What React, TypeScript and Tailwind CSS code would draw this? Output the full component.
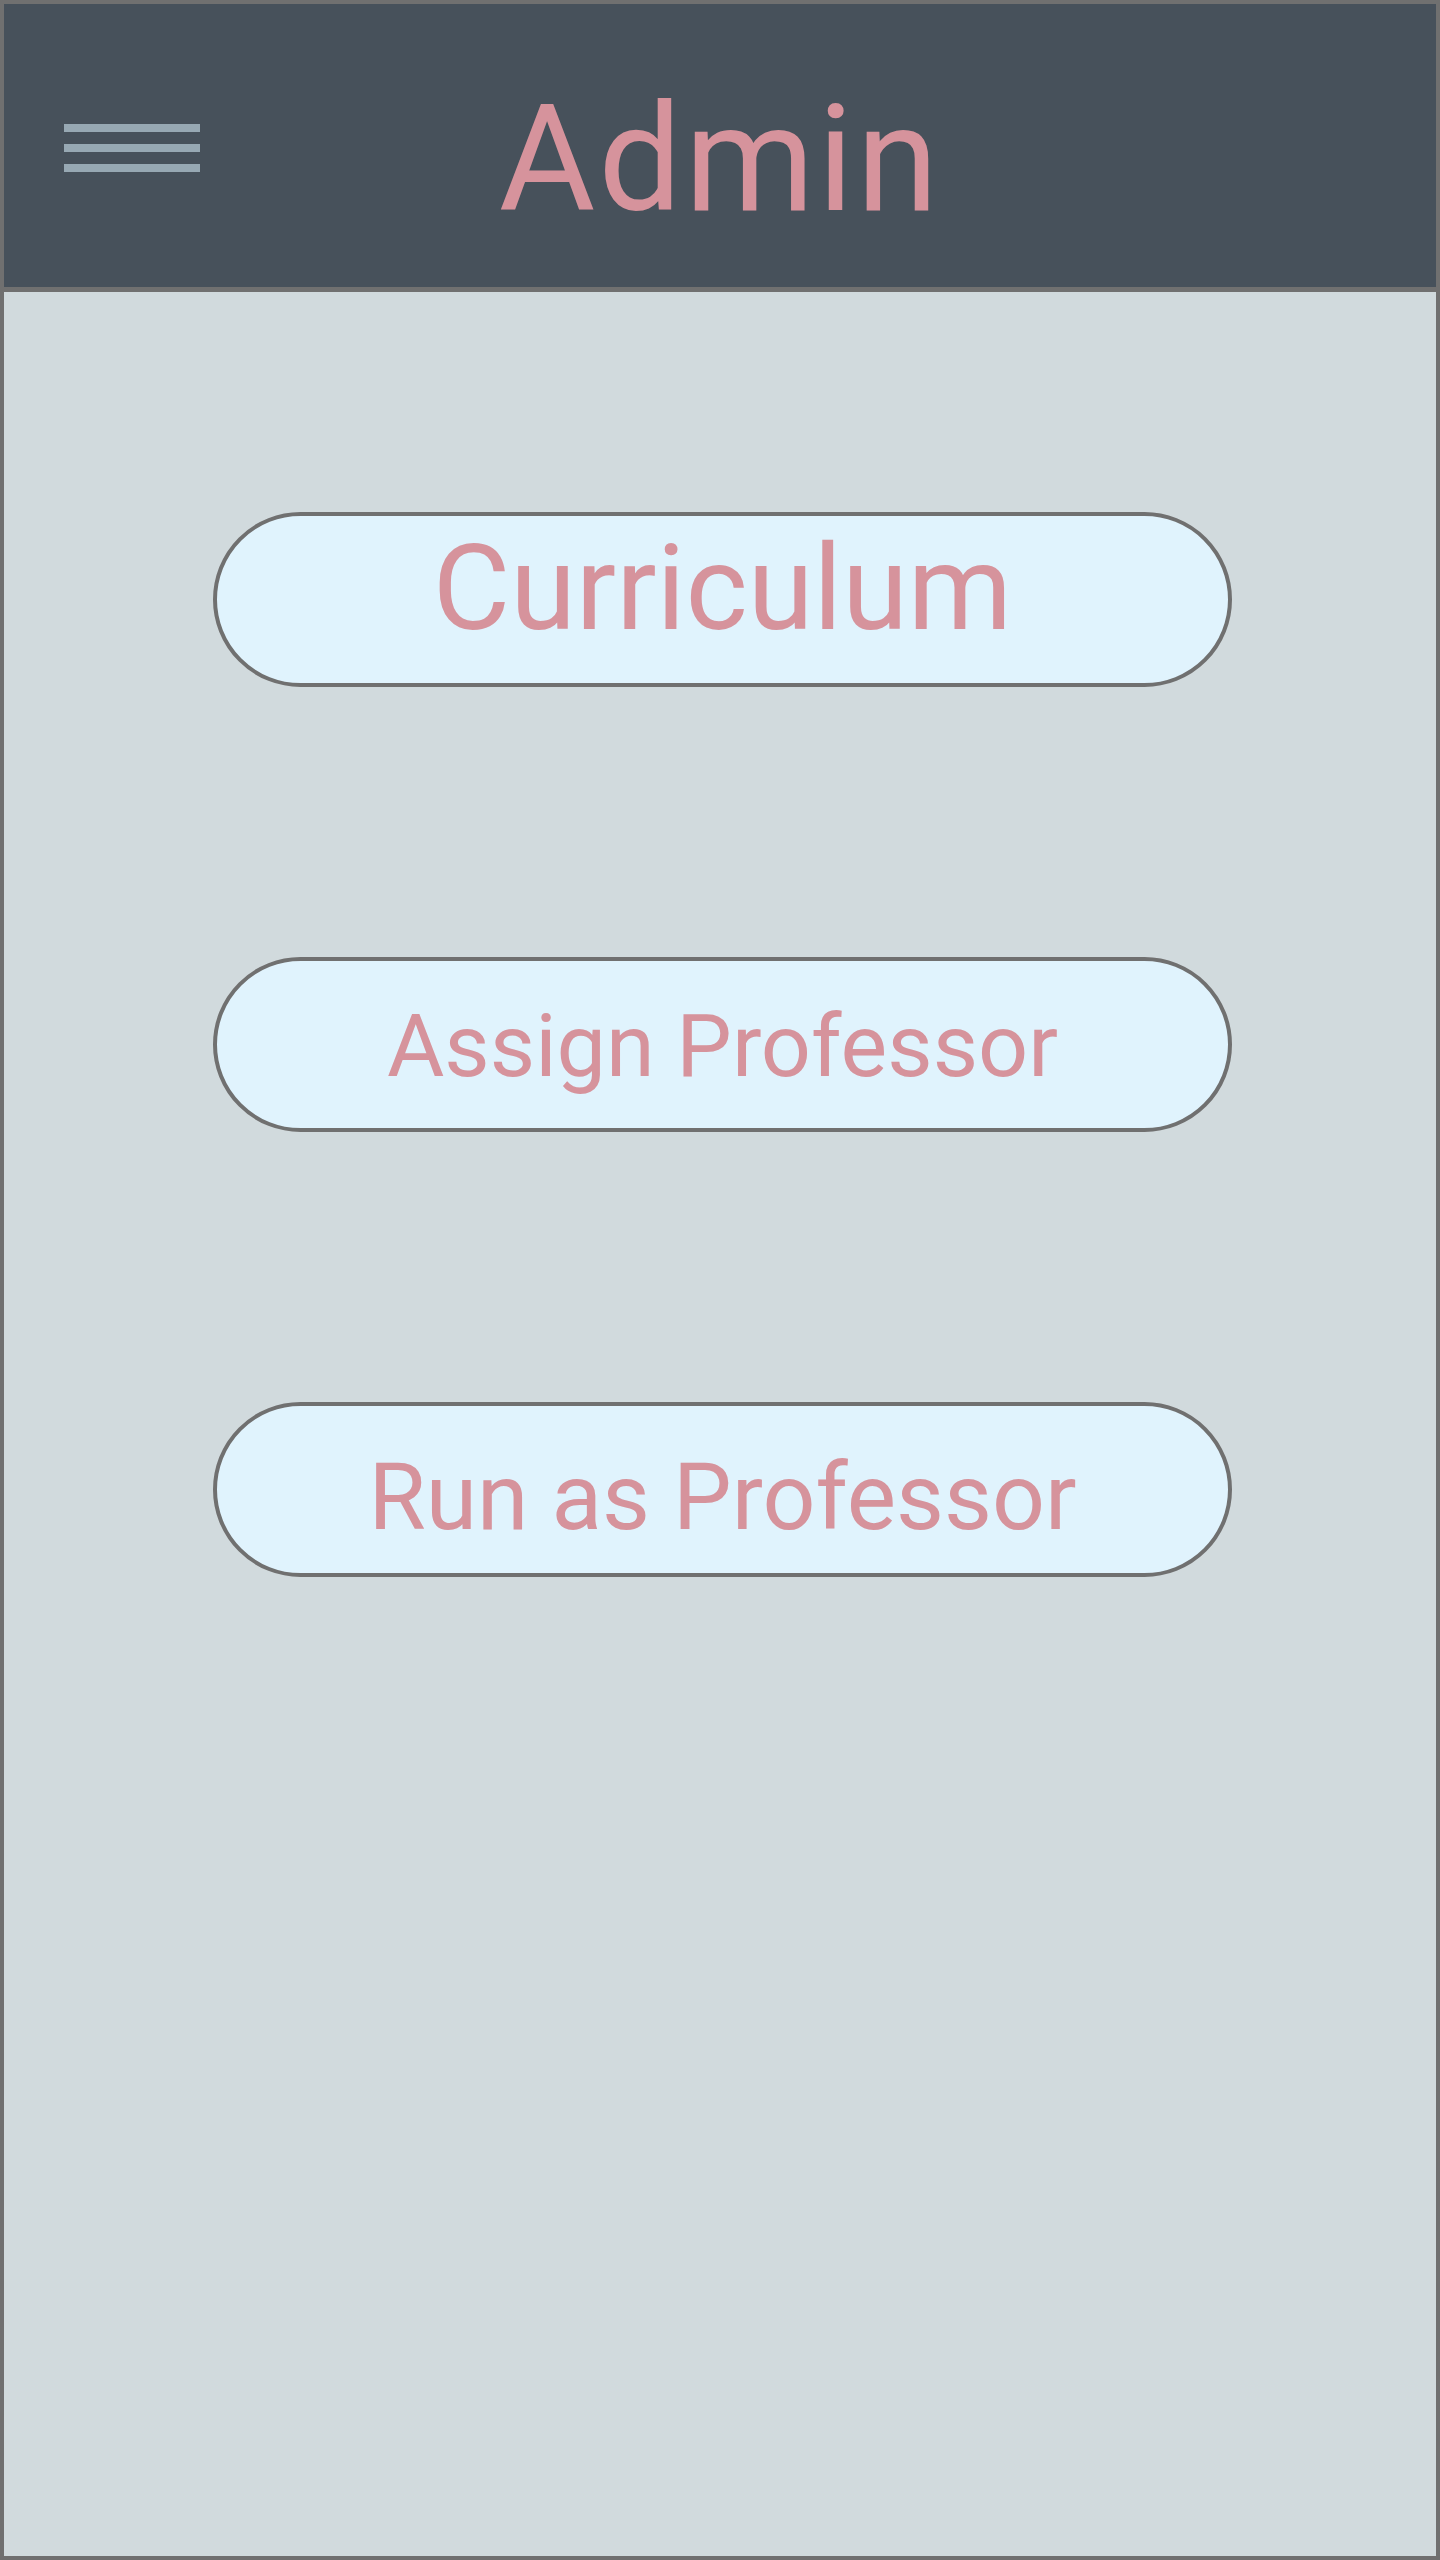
import React from "react";

const font = { fontFamily: "Roboto, 'Open Sans', sans-serif" };

function MenuIcon() {
  return (
    <div className="flex flex-col gap-[12px] w-[136px]">
      <div className="h-[8px] bg-[#97a8b3]" />
      <div className="h-[8px] bg-[#97a8b3]" />
      <div className="h-[8px] bg-[#97a8b3]" />
    </div>
  );
}

export default function App() {
  return (
    <div
      className="w-[1440px] h-[2560px] border-4 border-[#707070] bg-[#d1dadd] flex flex-col"
      style={font}
    >
      <header className="h-[288px] shrink-0 bg-[#47515b] border-b-[5px] border-[#707070] grid grid-cols-[1fr_auto_1fr] items-start">
        <div className="pl-[60px] pt-[120px]">
          <MenuIcon />
        </div>
        <h1 className="mt-[82px] text-[148px] leading-none tracking-[3px] text-[#d6939c] font-normal">
          Admin
        </h1>
        <div />
      </header>
      <main className="flex flex-col pl-[209px] pt-[220px] gap-[270px]">
        <button className="w-[1019px] h-[175px] rounded-full border-4 border-[#707070] bg-[#e0f3fd] flex justify-center items-start pt-[13px] text-[119px] leading-none text-[#d6939c]">
          Curriculum
        </button>
        <button className="w-[1019px] h-[175px] rounded-full border-4 border-[#707070] bg-[#e0f3fd] flex justify-center items-start pt-[41px] text-[88px] leading-none text-[#d6939c]">
          Assign Professor
        </button>
        <button className="w-[1019px] h-[175px] rounded-full border-4 border-[#707070] bg-[#e0f3fd] flex justify-center items-start pt-[45px] text-[93px] leading-none text-[#d6939c]">
          Run as Professor
        </button>
      </main>
    </div>
  );
}
